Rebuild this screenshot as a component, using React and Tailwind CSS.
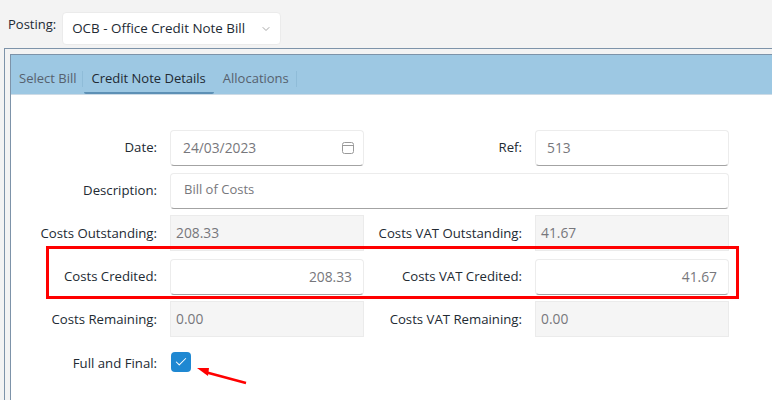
import { ChevronDown, Check } from "lucide-react";

const font = "[font-family:'Open_Sans','Noto_Sans',sans-serif]";

function Label({ children }) {
    return (
        <div className="flex items-center justify-end pr-[13px] text-[13.2px] text-[#222a33]">
            {children}
        </div>
    );
}

function Input({ value, right, children, className = "" }) {
    return (
        <div
            className={`flex items-center h-[36px] bg-white rounded-[4px] border border-[#ececec] border-b-[#a3a3a3] text-[13.8px] text-[#77777c] ${right ? "justify-end pr-[11px]" : "pl-[11px]"} ${className}`}
        >
            {value}
            {children}
        </div>
    );
}

function ReadOnly({ value }) {
    return (
        <div className="flex items-center h-[36px] -mt-px mb-px bg-[#f5f5f5] border border-[#ebebeb] pl-[5px] text-[13.8px] text-[#77777c]">
            {value}
        </div>
    );
}

function TabDivider() {
    return <span className="w-px h-[16px] mb-[7px] bg-[#8fbcd8]" />;
}

export default function App() {
    return (
        <div className={`relative w-[772px] h-[400px] overflow-hidden bg-[#f3f3f3] ${font}`}>
            <div className="flex items-start h-[48px] pl-[8px] pt-[12px]">
                <span className="mt-[3px] text-[13px] text-[#222a33]">Posting:</span>
                <div className="flex items-center w-[219px] h-[33px] ml-[6px] pl-[9px] bg-white rounded-[4px] border border-[#ebebeb] text-[13.4px] text-[#222a33]">
                    OCB - Office Credit Note Bill
                    <ChevronDown className="w-[12px] h-[12px] ml-[15px] text-[#a8a8a8]" />
                </div>
            </div>

            <div className="ml-[4px] h-[352px] border-l border-t border-[#7d93a9] pl-[5px] pt-[5px]">
                <div className="h-[346px] border-l border-t border-[#7d93a9] bg-white">
                    <div className="flex items-end h-[40px] bg-[#9dc8e3] border-b border-[#cddbe6] text-[13px]">
                        <div className="flex items-center h-[27px] pb-[3px] pl-[8px] pr-[5px] text-[#56616e]">
                            Select Bill
                        </div>
                        <TabDivider />
                        <div className="flex items-center h-[27px] pb-[1px] ml-px px-[8px] text-[#222a33] border-b-2 border-[#5d90b5] rounded-b-[2px]">
                            Credit Note Details
                        </div>
                        <div className="flex items-center h-[27px] pb-[3px] pl-[9px] pr-[7px] text-[#56616e]">
                            Allocations
                        </div>
                        <TabDivider />
                    </div>

                    <div className="grid grid-cols-[159px_194px_171px_194px] gap-y-[7px] pt-[35px]">
                        <Label>Date:</Label>
                        <Input value="24/03/2023" className="justify-between pl-[12px] pr-[9px]">
                            <svg className="text-[#9a9a9a]" width="12" height="12" viewBox="0 0 12 12" fill="none" stroke="currentColor">
                                <rect x="0.5" y="0.5" width="11" height="11" rx="2" />
                                <path d="M0.5 3.5 H11.5" />
                            </svg>
                        </Input>
                        <Label>Ref:</Label>
                        <Input value="513" />

                        <Label>Description:</Label>
                        <Input className="col-span-3 pl-[13px] pb-[3px] text-[13px]" value="Bill of Costs" />

                        <Label>Costs Outstanding:</Label>
                        <ReadOnly value="208.33" />
                        <Label>Costs VAT Outstanding:</Label>
                        <ReadOnly value="41.67" />

                        <Label>Costs Credited:</Label>
                        <Input value="208.33" right />
                        <Label>Costs VAT Credited:</Label>
                        <Input value="41.67" right />

                        <Label>Costs Remaining:</Label>
                        <ReadOnly value="0.00" />
                        <Label>Costs VAT Remaining:</Label>
                        <ReadOnly value="0.00" />

                        <div className="mt-[9px]"><Label>Full and Final:</Label></div>
                        <div className="mt-[7px] pl-px">
                            <div className="flex items-center justify-center w-[20px] h-[20px] rounded-[4px] bg-[#1f88d2]">
                                <Check className="w-[14px] h-[14px] text-white" strokeWidth={1.75} />
                            </div>
                        </div>
                    </div>
                </div>
            </div>

            {/* annotation overlays */}
            <div className="absolute left-[46px] top-[246px] w-[693px] h-[53px] border-[3px] border-[#ff0000]" />
            <svg className="absolute left-[190px] top-[360px]" width="64" height="30" viewBox="0 0 64 30">
                <path d="M15 12 L56 23" stroke="#ff0000" strokeWidth="2.5" fill="none" />
                <path d="M7 8 L19 8 L18 16 Z" fill="#ff0000" />
            </svg>
        </div>
    );
}
